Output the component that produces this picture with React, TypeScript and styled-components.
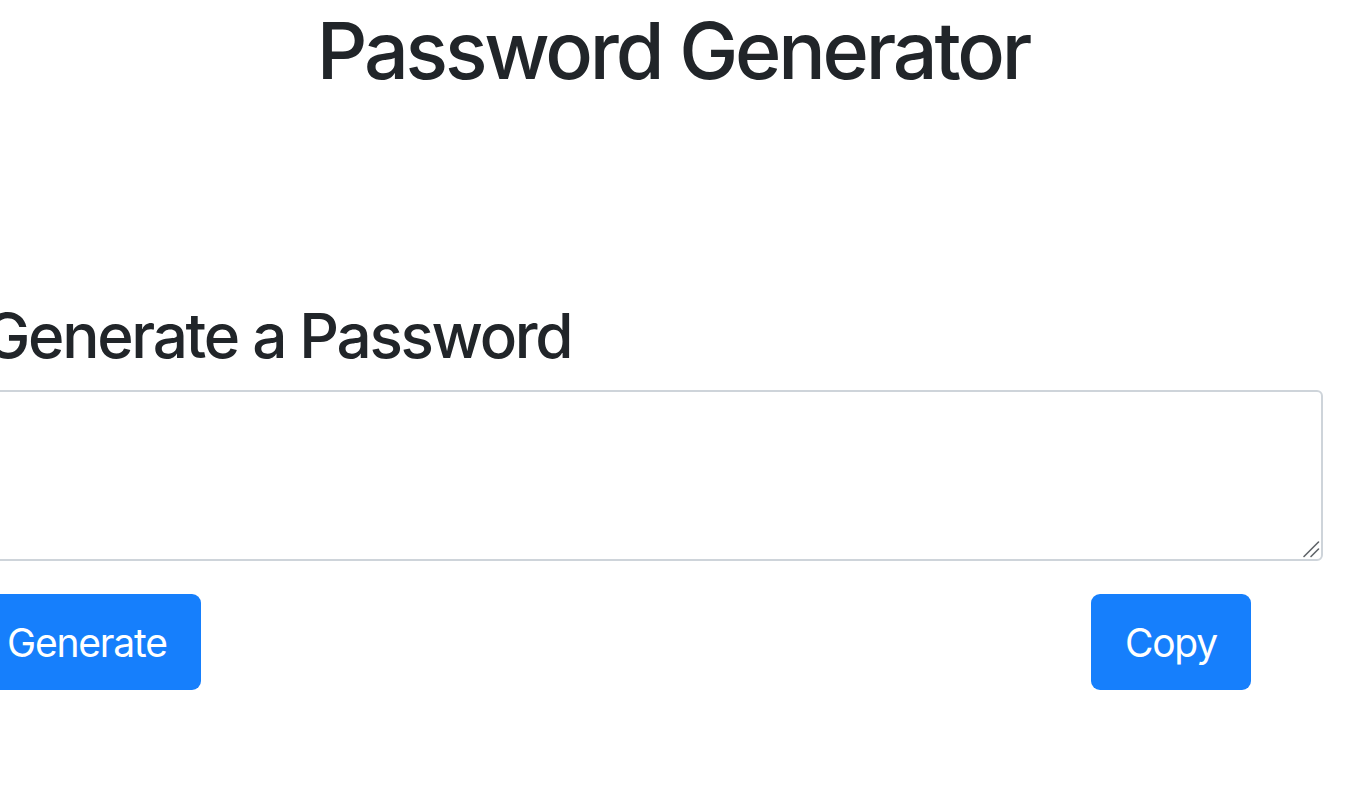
import React from "react";
import styled, { createGlobalStyle } from "styled-components";

const Global = createGlobalStyle`
  html, body { margin: 0; padding: 0; background: #fff; }
  body {
    font-family: Inter, "Liberation Sans", Arial, sans-serif;
    color: #212529;
    overflow: hidden;
  }
`;

const Page = styled.div`
  width: 1366px;
  height: 804px;
  display: flex;
  flex-direction: column;
`;

const Title = styled.h1`
  margin: 4px 0 0;
  padding-right: 20px;
  text-align: center;
  font-size: 79px;
  font-weight: 500;
  line-height: 92px;
  letter-spacing: -3.2px;
  color: #212529;
`;

const Card = styled.section`
  margin: 202px 43px 0 -27px;
  display: flex;
  flex-direction: column;
`;

const Heading = styled.h2`
  margin: 0 0 16px;
  padding-left: 11px;
  font-size: 62px;
  font-weight: 500;
  line-height: 76px;
  letter-spacing: -2.3px;
  color: #212529;
`;

const Field = styled.div`
  position: relative;
  height: 171px;
`;

const Output = styled.textarea`
  display: block;
  box-sizing: border-box;
  width: 100%;
  height: 100%;
  border: 2px solid #ced4da;
  border-radius: 6px;
  background: #fff;
  font: inherit;
  font-size: 38px;
  resize: none;
  outline: none;
`;

const Grip = styled.svg`
  position: absolute;
  right: 3px;
  bottom: 3px;
  width: 18px;
  height: 18px;
  pointer-events: none;
`;

const Actions = styled.div`
  display: flex;
  justify-content: space-between;
  margin-top: 33px;
  padding-right: 72px;
`;

const Button = styled.button`
  box-sizing: border-box;
  height: 96px;
  padding: 0 34px;
  border: none;
  border-radius: 9px;
  background: #167ffc;
  color: #fff;
  font-family: Inter, "Liberation Sans", Arial, sans-serif;
  font-size: 39px;
  font-weight: 400;
  letter-spacing: -1.2px;
  cursor: pointer;
`;

export default function App() {
  return (
    <>
      <Global />
      <Page>
        <Title>Password Generator</Title>
        <Card>
          <Heading>Generate a Password</Heading>
          <Field>
            <Output readOnly />
            <Grip viewBox="0 0 18 18">
              <path d="M2 16.5 L16.5 2" stroke="#5f6368" strokeWidth="1.6" strokeLinecap="round" />
              <path d="M9 16.5 L16.5 9" stroke="#5f6368" strokeWidth="1.6" strokeLinecap="round" />
            </Grip>
          </Field>
          <Actions>
            <Button>Generate</Button>
            <Button>Copy</Button>
          </Actions>
        </Card>
      </Page>
    </>
  );
}
